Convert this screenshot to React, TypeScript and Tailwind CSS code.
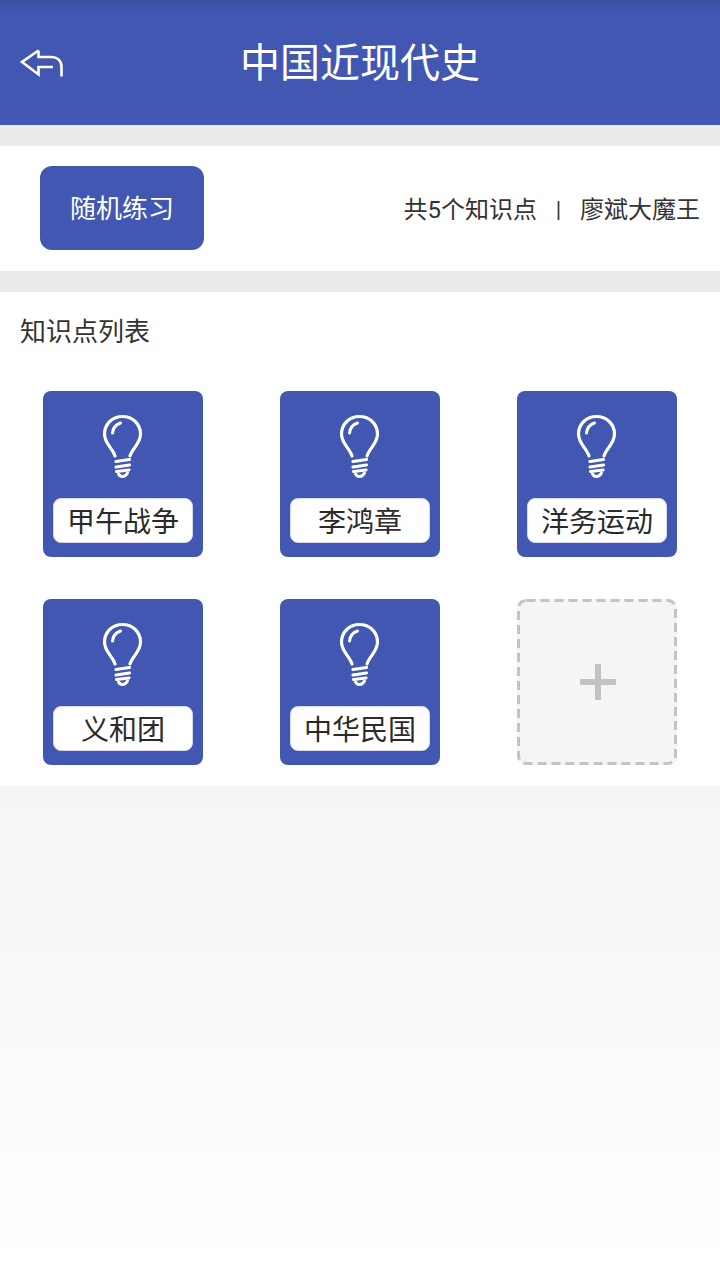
const FONT = '"Roboto", "Noto Sans CJK SC", sans-serif';

const POINTS = ["甲午战争", "李鸿章", "洋务运动", "义和团", "中华民国"];

function BackIcon() {
  return (
    <svg width="44" height="32" viewBox="0 0 44 32" fill="none" stroke="white" strokeWidth="2.6" strokeLinejoin="miter">
      <path d="M18.5 3.5 L2 15 L18.5 27.5 V20 H33" />
      <path d="M18.5 3.5 V10 H31 C37.5 10 41.5 14 41.5 20 V29.5" />
    </svg>
  );
}

function BulbIcon() {
  return (
    <svg width="42" height="66" viewBox="0 0 42 66" fill="none" stroke="white" strokeLinecap="round">
      <path
        strokeWidth="3.2"
        d="M13 42 C10.5 34 2.5 29.5 2.5 20 C2.5 10 10.5 2.5 20.5 2.5 C30.5 2.5 38.5 10 38.5 20 C38.5 29.5 30.5 34 28 42"
      />
      <path strokeWidth="3" d="M10.5 19 C11 14.5 14 10.5 18.5 9" />
      <path strokeWidth="3.2" d="M14 47.5 L27.5 45.5 M14 53 L27.5 51 M14.5 57.5 L27 56" />
      <path strokeWidth="3" d="M16.5 60 C18.5 63.5 23 63.5 25.5 59" />
    </svg>
  );
}

function PointCard({ name }: { name: string }) {
  return (
    <div className="w-40 h-[166px] rounded-lg bg-[#4257b2] flex flex-col items-center">
      <div className="mt-[23px] h-[66px]">
        <BulbIcon />
      </div>
      <div className="mt-[18px] w-[140px] h-[45px] pt-[4px] rounded-lg bg-white border border-[#d5d9ec] flex items-center justify-center text-[28px] text-[#2a2a2a]">
        {name}
      </div>
    </div>
  );
}

export default function App() {
  return (
    <div className="w-[720px] h-[1280px] flex flex-col overflow-hidden bg-white" style={{ fontFamily: FONT }}>
      {/* Header */}
      <div className="relative h-[125px] shrink-0 bg-gradient-to-b from-[#3d4f9f] via-[#4257b2] via-[10%] to-[#4257b2] flex items-center justify-center">
        <div className="absolute left-[20px] top-[47px]">
          <BackIcon />
        </div>
        <span className="pt-[3px] text-[40px] text-white leading-none">中国近现代史</span>
      </div>

      <div className="h-[21px] shrink-0 bg-[#ebebeb]" />

      {/* Practice bar */}
      <div className="h-[125px] shrink-0 bg-white flex items-center justify-between pl-[40px] pr-[20px]">
        <button className="w-[164px] h-[84px] pt-[4px] mb-[2px] rounded-xl bg-[#4257b2] text-white text-[26px]">随机练习</button>
        <div className="flex items-center pt-[2px] text-[24px] text-[#333333]">
          <span className="pl-[1px]">共5个知识点</span>
          <span className="w-[43px] text-center text-[22px]">|</span>
          <span>廖斌大魔王</span>
        </div>
      </div>

      <div className="h-[21px] shrink-0 bg-[#ebebeb]" />

      {/* Knowledge point list */}
      <div className="h-[494px] shrink-0 bg-white">
        <div className="h-[79px] pt-[2px] pl-[20px] flex items-center text-[26px] text-[#333333]">知识点列表</div>
        <div className="mt-[20px] grid grid-cols-[160px_160px_160px] gap-x-[77px] gap-y-[42px] pl-[43px]">
          {POINTS.map((name) => (
            <PointCard key={name} name={name} />
          ))}
          <div className="relative w-40 h-[166px] rounded-lg bg-[#f4f5f7] flex items-center justify-center">
            <svg className="absolute inset-0" width="160" height="166" fill="none" stroke="#c4c4c4" strokeWidth="3" strokeDasharray="9 5">
              <rect x="1.5" y="1.5" width="157" height="163" rx="8" />
            </svg>
            <svg className="ml-[2px]" width="36" height="36" viewBox="0 0 36 36" fill="#c2c2c2">
              <rect x="0" y="15" width="36" height="6" />
              <rect x="15" y="0" width="6" height="36" />
            </svg>
          </div>
        </div>
      </div>

      {/* Empty area */}
      <div className="flex-1 bg-gradient-to-b from-[#f5f5f6] to-white" />
    </div>
  );
}
